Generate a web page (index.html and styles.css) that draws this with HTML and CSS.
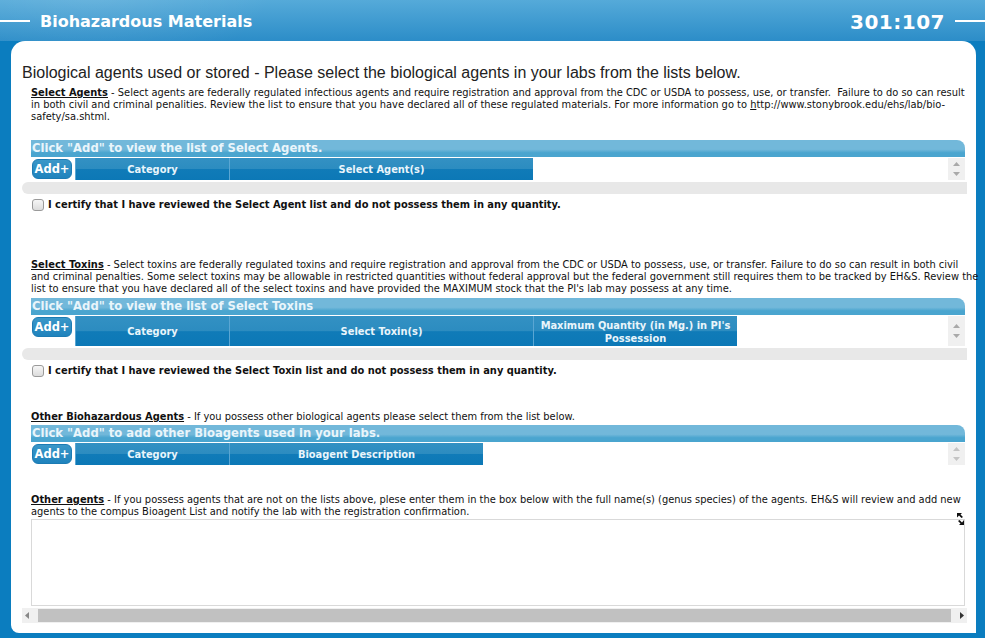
FILE: index.html
```html
<!DOCTYPE html>
<html lang="en">
<head>
    <meta charset="utf-8">
    <title>Biohazardous Materials</title>
    <link rel="stylesheet" href="styles.css">
</head>
<body>
    <!-- Page header -->
    <div class="top-bar">
        <span class="rule"></span>
        <span class="page-title">Biohazardous Materials</span>
        <span class="page-code">301:107</span>
        <span class="rule rule-right"></span>
    </div>

    <div class="panel">
        <div class="intro">Biological agents used or stored - Please select the biological agents in your labs from the lists below.</div>

        <!-- Select agents -->
        <p class="desc first"><b class="u">Select Agents</b> - Select agents are federally regulated infectious agents and require registration and approval from the CDC or USDA to possess, use, or transfer.&nbsp; Failure to do so can result in both civil and criminal penalities. Review the list to ensure that you have declared all of these regulated materials. For more information go to <span class="u">h</span>ttp://www.stonybrook.edu/ehs/lab/bio-safety/sa.shtml.</p>
        <div class="grid-title">Click "Add" to view the list of Select Agents.</div>
        <div class="grid-head">
            <button class="add-btn">Add+</button>
            <div class="col col-cat">Category</div>
            <div class="col col-wide">Select Agent(s)</div>
            <div class="spin">
                <svg width="9" height="16" viewBox="0 0 9 16"><path d="M1 5 L4.5 1 L8 5 Z M1 11 L8 11 L4.5 15 Z" fill="#a9a9a9"/></svg>
            </div>
        </div>
        <div class="grey-bar"></div>
        <label class="certify"><input type="checkbox"> I certify that I have reviewed the Select Agent list and do not possess them in any quantity.</label>

        <!-- Select toxins -->
        <p class="desc toxins"><b class="u">Select Toxins</b> - Select toxins are federally regulated toxins and require registration and approval from the CDC or USDA to possess, use, or transfer. Failure to do so can result in both civil<br>and criminal penalties. Some select toxins may be allowable in restricted quantities without federal approval but the federal government still requires them to be tracked by EH&amp;S. Review the<br>list to ensure that you have declared all of the select toxins and have provided the MAXIMUM stock that the PI's lab may possess at any time.</p>
        <div class="grid-title">Click "Add" to view the list of Select Toxins</div>
        <div class="grid-head tall">
            <button class="add-btn">Add+</button>
            <div class="col col-cat">Category</div>
            <div class="col col-wide">Select Toxin(s)</div>
            <div class="col col-max">Maximum Quantity (in Mg.) in PI's Possession</div>
            <div class="spin">
                <svg width="9" height="16" viewBox="0 0 9 16"><path d="M1 5 L4.5 1 L8 5 Z M1 11 L8 11 L4.5 15 Z" fill="#a9a9a9"/></svg>
            </div>
        </div>
        <div class="grey-bar"></div>
        <label class="certify"><input type="checkbox"> I certify that I have reviewed the Select Toxin list and do not possess them in any quantity.</label>

        <!-- Other bioagents -->
        <p class="desc other"><b class="u">Other Biohazardous Agents</b> - If you possess other biological agents please select them from the list below.</p>
        <div class="grid-title">Click "Add" to add other Bioagents used in your labs.</div>
        <div class="grid-head">
            <button class="add-btn">Add+</button>
            <div class="col col-cat">Category</div>
            <div class="col col-desc">Bioagent Description</div>
            <div class="spin">
                <svg width="9" height="16" viewBox="0 0 9 16"><path d="M1 5 L4.5 1 L8 5 Z M1 11 L8 11 L4.5 15 Z" fill="#c4c4c4"/></svg>
            </div>
        </div>

        <!-- Free text agents -->
        <p class="desc free"><b class="u">Other agents</b> - If you possess agents that are not on the lists above, plese enter them in the box below with the full name(s) (genus species) of the agents. EH&amp;S will review and add new agents to the compus Bioagent List and notify the lab with the registration confirmation.</p>
        <div class="text-wrap">
            <textarea class="agents-box"></textarea>
            <svg class="resize" width="10" height="14" viewBox="0 0 10 14">
                <path d="M1 1 L6 1 L4.5 2.5 L7 5 L5.5 6 L3 3.5 L1 5.5 Z" fill="#111"/>
                <path d="M8 8 L8 13 L3 13 L4.5 11.5 L2 9 L3.5 8 L6 10.5 Z" fill="#111"/>
            </svg>
        </div>
        <div class="h-scroll">
            <svg width="12" height="15" viewBox="0 0 12 15"><path d="M7 4 L3 7.5 L7 11 Z" fill="#888"/></svg>
            <div class="thumb"></div>
            <svg width="12" height="15" viewBox="0 0 12 15"><path d="M5 4 L9 7.5 L5 11 Z" fill="#333"/></svg>
        </div>
    </div>
</body>
</html>
```

FILE: styles.css
```css
body {
    margin: 0;
    height: 638px;
    overflow: hidden;
    background-color: #0b7dbf;
    font-family: "DejaVu Sans", Verdana, sans-serif;
}
.top-bar {
    height: 41px;
    display: flex;
    align-items: center;
    background: radial-gradient(ellipse 260px 120px at 90px -10px, rgba(255,255,255,0.12), rgba(255,255,255,0) 70%),
                linear-gradient(#55aad9, #2c8dc8);
    color: #fff;
}
.rule {
    width: 30px;
    height: 2px;
    background-color: #fff;
    margin-right: 10px;
}
.rule-right {
    margin-right: 0;
    margin-left: 10px;
}
.page-title {
    font-weight: bold;
    font-size: 16px;
    flex: 1;
    padding-top: 2px;
}
.page-code {
    font-weight: bold;
    font-size: 20px;
    letter-spacing: 0.5px;
    padding-top: 2px;
}
.panel {
    margin: 0 9px 0 11px;
    height: 592px;
    background-color: #fff;
    border-radius: 14px 14px 0 8px;
    padding-top: 23px;
    box-sizing: border-box;
    color: #111;
}
.intro {
    margin-left: 11px;
    font-family: "Liberation Sans", Arial, sans-serif;
    font-size: 16px;
    line-height: 18px;
    color: #222;
}
.desc {
    margin: 0 0 0 20px;
    width: 934px;
    font-size: 9.9px;
    line-height: 12px;
}
.desc.first {
    margin-top: 5px;
}
.desc.toxins {
    margin-top: 48px;
    width: 950px;
}
.desc.other {
    margin-top: 34px;
}
.desc.free {
    margin-top: 29px;
}
.u {
    text-decoration: underline;
}
.grid-title {
    margin: 17px 0 0 20px;
    padding-left: 1px;
    width: 933px;
    height: 17px;
    line-height: 17px;
    border-radius: 0 8px 0 0;
    background: linear-gradient(#72b8da 0, #72b8da 55%, #4aa5cf 75%, #4aa5cf 100%);
    color: #e9f5fb;
    font-weight: bold;
    font-size: 11.6px;
    white-space: nowrap;
}
.toxins + .grid-title {
    margin-top: 3px;
}
.other + .grid-title {
    margin-top: 2px;
}
.grid-head {
    margin: 1px 0 0 20px;
    width: 934px;
    height: 22px;
    display: flex;
}
.grid-head.tall {
    height: 30px;
}
.add-btn {
    width: 40px;
    height: 20px;
    margin: 1px 3px 0 1px;
    padding: 0;
    border: 1px solid #1c7bb3;
    border-radius: 6px;
    background: linear-gradient(#3a97c8, #1f83bd);
    color: #fff;
    font-family: "DejaVu Sans", Verdana, sans-serif;
    font-weight: bold;
    font-size: 11.5px;
}
.col {
    display: flex;
    align-items: center;
    justify-content: center;
    text-align: center;
    box-sizing: border-box;
    border-left: 1px solid #5aa6d3;
    background: linear-gradient(#3391c3 0, #2c8cc0 50%, #107bb8 52%, #0c78b6 100%);
    color: #e9f5fb;
    font-weight: bold;
    font-size: 9.9px;
    line-height: 12px;
    padding-top: 1px;
}
.col-cat {
    width: 154px;
}
.col-wide {
    width: 304px;
}
.col-max {
    width: 204px;
    padding: 3px 4px 0;
    align-items: flex-start;
    line-height: 13px;
}
.col-desc {
    width: 254px;
}
.spin {
    margin-left: auto;
    width: 17px;
    background-color: #f0f0f0;
    display: flex;
    align-items: center;
    justify-content: center;
}
.grey-bar {
    margin: 2px 0 0 11px;
    width: 945px;
    height: 12px;
    border-radius: 6px 0 0 6px;
    background-color: #e8e8e8;
}
.certify {
    display: flex;
    align-items: center;
    margin: 3px 0 0 21px;
    height: 14px;
    font-weight: bold;
    font-size: 9.9px;
}
.certify input {
    appearance: none;
    width: 12px;
    height: 12px;
    margin: 1px 4px 0 0;
    border: 1px solid #9a9a9a;
    border-radius: 3px;
    background: linear-gradient(#f6f6f6, #dcdcdc);
}
.text-wrap {
    position: relative;
    margin: 1px 0 0 20px;
    width: 934px;
}
.agents-box {
    display: block;
    width: 934px;
    height: 87px;
    box-sizing: border-box;
    border: 1px solid #d9d9d9;
    resize: none;
    margin: 0;
}
.resize {
    position: absolute;
    right: -1px;
    top: -7px;
}
.h-scroll {
    margin: 2px 0 0 11px;
    width: 945px;
    height: 15px;
    background-color: #f0f0f0;
    display: flex;
    align-items: center;
}
.thumb {
    flex: 1;
    height: 13px;
    margin: 0 4px;
    background-color: #c1c1c1;
}
```
